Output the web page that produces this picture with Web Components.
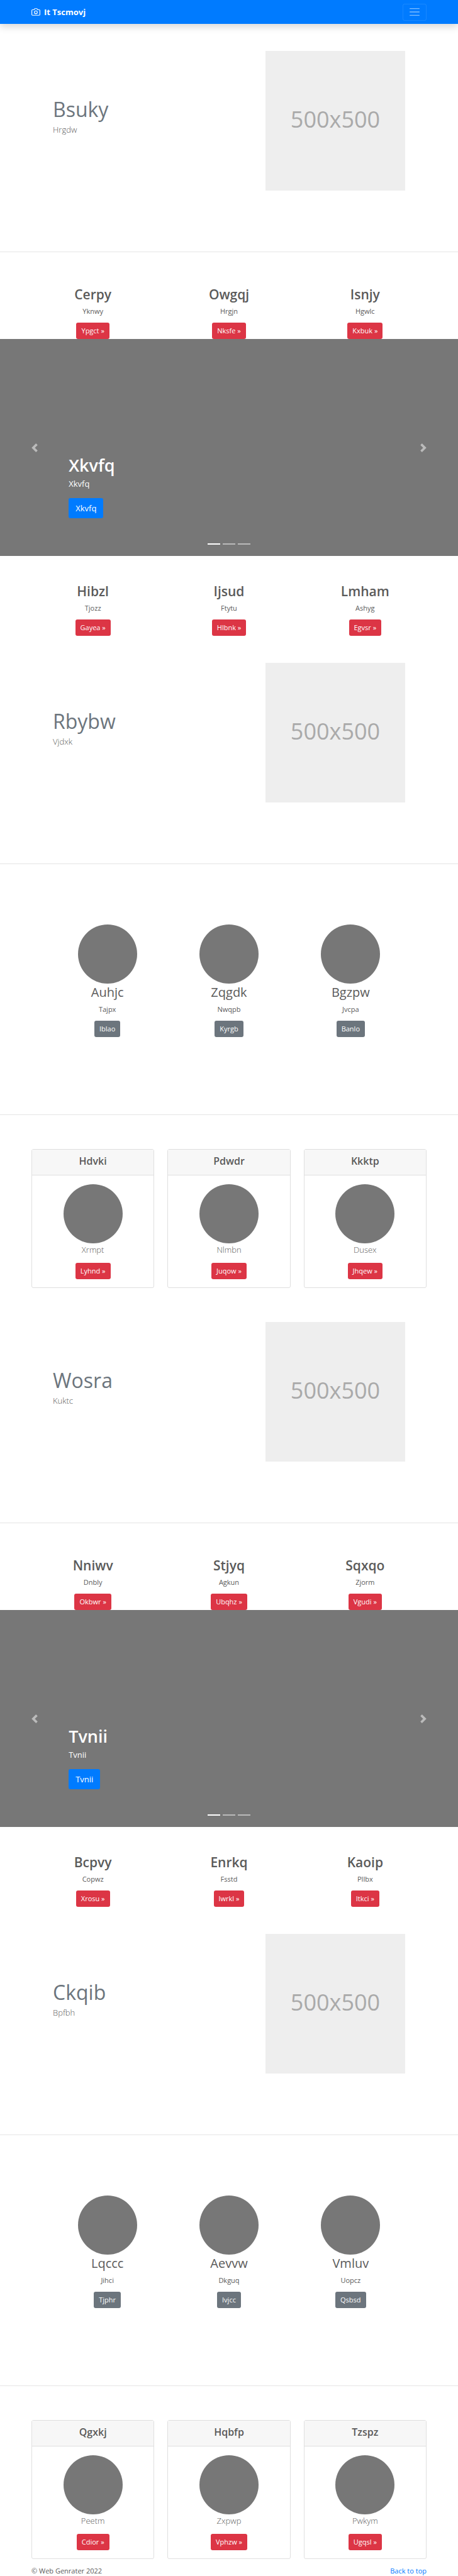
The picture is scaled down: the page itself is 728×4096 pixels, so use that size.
<!DOCTYPE html>
<html lang="en">
<head>
<meta charset="utf-8">
<meta name="viewport" content="width=device-width, initial-scale=1">
<title>It Tscmovj</title>
<style>
  body {
    margin: 0;
    background: #fff;
    color: #5a5a5a;
    font: 400 11px/16px "Open Sans", "Noto Sans", sans-serif;
  }
</style>
</head>
<body>
<site-nav>It Tscmovj</site-nav>
<main>
  <hero-block><span slot="title">Bsuky</span>Hrgdw</hero-block>

  <column-row lead>
    <text-column><span slot="title">Cerpy</span>Yknwy<action-link slot="action">Ypgct »</action-link></text-column>
    <text-column><span slot="title">Owgqj</span>Hrgjn<action-link slot="action">Nksfe »</action-link></text-column>
    <text-column><span slot="title">Isnjy</span>Hgwlc<action-link slot="action">Kxbuk »</action-link></text-column>
  </column-row>

  <slide-show><span slot="title">Xkvfq</span>Xkvfq<action-link slot="action" kind="primary">Xkvfq</action-link></slide-show>

  <column-row>
    <text-column><span slot="title">Hibzl</span>Tjozz<action-link slot="action">Gayea »</action-link></text-column>
    <text-column><span slot="title">Ijsud</span>Ftytu<action-link slot="action">Hlbnk »</action-link></text-column>
    <text-column><span slot="title">Lmham</span>Ashyg<action-link slot="action">Egvsr »</action-link></text-column>
  </column-row>

  <hero-block><span slot="title">Rbybw</span>Vjdxk</hero-block>

  <profile-row>
    <text-column round><span slot="title">Auhjc</span>Tajpx<action-link slot="action" kind="secondary">Iblao</action-link></text-column>
    <text-column round><span slot="title">Zqgdk</span>Nwqpb<action-link slot="action" kind="secondary">Kyrgb</action-link></text-column>
    <text-column round><span slot="title">Bgzpw</span>Jvcpa<action-link slot="action" kind="secondary">Banlo</action-link></text-column>
  </profile-row>

  <column-row lead cards>
    <info-card><span slot="title">Hdvki</span>Xrmpt<action-link slot="action">Lyhnd »</action-link></info-card>
    <info-card><span slot="title">Pdwdr</span>Nlmbn<action-link slot="action">Juqow »</action-link></info-card>
    <info-card><span slot="title">Kkktp</span>Dusex<action-link slot="action">Jhqew »</action-link></info-card>
  </column-row>

  <hero-block><span slot="title">Wosra</span>Kuktc</hero-block>

  <column-row lead>
    <text-column><span slot="title">Nniwv</span>Dnbly<action-link slot="action">Okbwr »</action-link></text-column>
    <text-column><span slot="title">Stjyq</span>Agkun<action-link slot="action">Ubqhz »</action-link></text-column>
    <text-column><span slot="title">Sqxqo</span>Zjorm<action-link slot="action">Vgudi »</action-link></text-column>
  </column-row>

  <slide-show><span slot="title">Tvnii</span>Tvnii<action-link slot="action" kind="primary">Tvnii</action-link></slide-show>

  <column-row>
    <text-column><span slot="title">Bcpvy</span>Copwz<action-link slot="action">Xrosu »</action-link></text-column>
    <text-column><span slot="title">Enrkq</span>Fsstd<action-link slot="action">Iwrkl »</action-link></text-column>
    <text-column><span slot="title">Kaoip</span>Pllbx<action-link slot="action">Itkci »</action-link></text-column>
  </column-row>

  <hero-block><span slot="title">Ckqib</span>Bpfbh</hero-block>

  <profile-row>
    <text-column round><span slot="title">Lqccc</span>Jihci<action-link slot="action" kind="secondary">Tjphr</action-link></text-column>
    <text-column round><span slot="title">Aevvw</span>Dkguq<action-link slot="action" kind="secondary">Ivjcc</action-link></text-column>
    <text-column round><span slot="title">Vmluv</span>Uopcz<action-link slot="action" kind="secondary">Qsbsd</action-link></text-column>
  </profile-row>

  <column-row lead cards>
    <info-card><span slot="title">Qgxkj</span>Peetm<action-link slot="action">Cdior »</action-link></info-card>
    <info-card><span slot="title">Hqbfp</span>Zxpwp<action-link slot="action">Vphzw »</action-link></info-card>
    <info-card><span slot="title">Tzspz</span>Pwkym<action-link slot="action">Ugqsl »</action-link></info-card>
  </column-row>
</main>
<site-footer>© Web Genrater 2022</site-footer>

<script>
const define = (name, html) => {
  const template = document.createElement('template');
  template.innerHTML = html;
  customElements.define(name, class extends HTMLElement {
    constructor() {
      super();
      this.attachShadow({ mode: 'open' }).append(template.content.cloneNode(true));
    }
  });
};

define('site-nav', `
  <style>
    :host { display: block; position: relative; background: #007bff; box-shadow: 0 5px 11px rgba(0,0,0,.15); }
    nav { display: flex; align-items: center; justify-content: space-between; height: 38px; padding: 0 50px; }
    a { display: flex; align-items: center; gap: 6px; color: #fff; font-size: 13px; line-height: 20px; font-weight: 700; text-decoration: none; }
    svg { display: block; }
    button { display: grid; place-items: center; width: 38px; height: 27px; padding: 0; background: none; border: 1px solid rgba(255,255,255,.1); border-radius: 3px; }
  </style>
  <nav>
    <a href="#"><svg width="14" height="14" viewBox="0 0 24 24" fill="none" stroke="#fff" stroke-width="2" stroke-linecap="round" stroke-linejoin="round" aria-hidden="true"><path d="M23 19a2 2 0 0 1-2 2H3a2 2 0 0 1-2-2V8a2 2 0 0 1 2-2h4l2-3h6l2 3h4a2 2 0 0 1 2 2z"/><circle cx="12" cy="13" r="4"/></svg><span><slot></slot></span></a>
    <button type="button" aria-label="Toggle navigation"><svg width="20" height="20" viewBox="0 0 30 30" stroke="rgba(255,255,255,.5)" stroke-width="2" stroke-linecap="round" stroke-miterlimit="10"><path d="M4 7h22M4 15h22M4 23h22"/></svg></button>
  </nav>`);

define('action-link', `
  <style>
    :host { display: inline-block; --fill: #dc3545; }
    :host([kind=primary]) { --fill: #007bff; }
    :host([kind=secondary]) { --fill: #6c757d; }
    a { display: block; padding: 5px 8px; border-radius: 3px; background: var(--fill); color: #fff; font-size: 11px; line-height: 16px; font-weight: 400; text-decoration: none; }
    :host([kind=primary]) a { padding: 6px 11px; font-size: 13px; line-height: 20px; }
  </style>
  <a href="#"><slot></slot></a>`);

define('hero-block', `
  <style>
    :host { display: block; padding: 43px 84px 97px; border-bottom: 1px solid #e5e5e5; }
    section { display: flex; justify-content: space-between; }
    .copy { padding-top: 73px; }
    h2 { margin: 0 0 2px; color: #6c757d; font-size: 32px; line-height: 40px; font-weight: 400; }
    p { margin: 0; font-size: 13px; line-height: 20px; font-weight: 300; }
    .picture { display: grid; place-items: center; box-sizing: border-box; width: 222px; height: 222px; padding-bottom: 4px; background: #eee; color: #aaa; font-size: 36px; line-height: 48px; }
  </style>
  <section>
    <div class="copy"><h2><slot name="title"></slot></h2><p><slot></slot></p></div>
    <div class="picture">500x500</div>
  </section>`);

define('column-row', `
  <style>
    :host { display: grid; grid-template-columns: repeat(3, 1fr); gap: 21px; padding: 43px 50px 0; }
    :host([lead]) { padding-top: 54px; }
    :host([cards]) { padding-bottom: 11px; }
  </style>
  <slot></slot>`);

define('profile-row', `
  <style>
    :host { display: grid; grid-template-columns: repeat(3, 1fr); padding: 96px 74px 123px; border-bottom: 1px solid #e5e5e5; }
  </style>
  <slot></slot>`);

define('text-column', `
  <style>
    :host { display: flex; flex-direction: column; align-items: center; text-align: center; }
    .disc { display: none; width: 94px; height: 94px; margin-bottom: 1px; border-radius: 50%; background: #777; }
    :host([round]) .disc { display: block; }
    h2 { margin: 0 0 6px; font-size: 21px; line-height: 26px; font-weight: 600; }
    :host([round]) h2 { font-size: 20px; font-weight: 400; }
    p { margin: 0 0 10px; }
  </style>
  <div class="disc"></div>
  <h2><slot name="title"></slot></h2>
  <p><slot></slot></p>
  <slot name="action"></slot>`);

define('info-card', `
  <style>
    :host { display: block; border: 1px solid #dfdfdf; border-radius: 3px; text-align: center; }
    header { padding: 8px; background: #f7f7f7; border-bottom: 1px solid #dfdfdf; }
    h3 { margin: 0 0 4px; font-size: 16px; line-height: 20px; font-weight: 600; }
    .body { display: flex; flex-direction: column; align-items: center; padding: 14px 13px 13px; }
    .disc { width: 94px; height: 94px; border-radius: 50%; background: #777; }
    p { margin: 0 0 11px; font-size: 13px; line-height: 20px; font-weight: 300; }
  </style>
  <header><h3><slot name="title"></slot></h3></header>
  <div class="body">
    <div class="disc"></div>
    <p><slot></slot></p>
    <slot name="action"></slot>
  </div>`);

define('slide-show', `
  <style>
    :host { display: grid; grid-template-columns: 15% 1fr 15%; background: #777; color: #fff; }
    button { padding: 0; border: 0; background: none; }
    .step { display: grid; place-items: center; grid-row: 1 / 3; opacity: .5; }
    .prev { grid-column: 1; }
    .next { grid-column: 3; }
    svg { display: block; }
    .caption { grid-area: 1 / 2; padding: 185px 0 40px; }
    h1 { margin: 0 0 3px; font-size: 27px; line-height: 32px; font-weight: 600; }
    p { margin: 0 0 13px; font-size: 13px; line-height: 20px; }
    .marks { grid-area: 2 / 2; display: flex; justify-content: center; gap: 4px; padding-bottom: 18px; }
    .marks button { width: 20px; height: 2px; background: #fff; opacity: .5; }
    .marks .on { opacity: 1; }
    ::slotted(action-link) { display: block; width: fit-content; }
  </style>
  <button class="step prev" type="button" aria-label="Previous"><svg width="14" height="14" viewBox="0 0 8 8" fill="#fff"><path d="M5.25 0l-4 4 4 4 1.5-1.5L4.25 4l2.5-2.5L5.25 0z"/></svg></button>
  <div class="caption"><h1><slot name="title"></slot></h1><p><slot></slot></p><slot name="action"></slot></div>
  <div class="marks"><button class="on" type="button" aria-label="Slide 1"></button><button type="button" aria-label="Slide 2"></button><button type="button" aria-label="Slide 3"></button></div>
  <button class="step next" type="button" aria-label="Next"><svg width="14" height="14" viewBox="0 0 8 8" fill="#fff"><path d="M2.75 0l-1.5 1.5L3.75 4l-2.5 2.5L2.75 8l4-4-4-4z"/></svg></button>`);

define('site-footer', `
  <style>
    :host { display: block; }
    footer { display: flex; justify-content: space-between; padding: 0 50px; }
    a { color: #007bff; text-decoration: none; }
  </style>
  <footer><span><slot></slot></span><a href="#">Back to top</a></footer>`);
</script>
</body>
</html>
